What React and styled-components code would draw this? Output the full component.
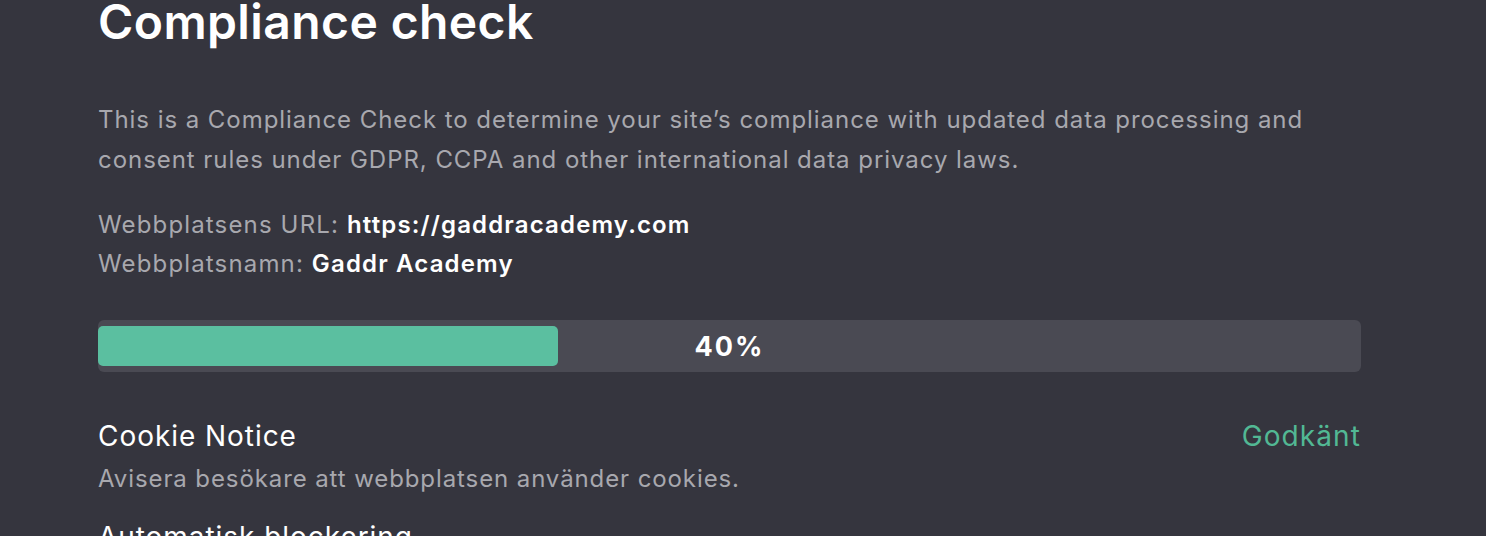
import React from "react";
import styled, { createGlobalStyle } from "styled-components";

const Global = createGlobalStyle`
  html, body { margin: 0; padding: 0; background: #35353e; }
  body { font-family: Inter, "Noto Sans", sans-serif; -webkit-font-smoothing: antialiased; }
`;

const Page = styled.main`
  width: 1486px;
  height: 536px;
  overflow: hidden;
  box-sizing: border-box;
  padding: 0 125px 0 98px;
  display: flex;
  flex-direction: column;
  & > * { flex-shrink: 0; }
`;

const Title = styled.h1`
  margin: -6px 0 0;
  font-weight: 600;
  font-size: 48px;
  line-height: 56px;
  color: #ffffff;
  letter-spacing: 0.4px;
`;

const Intro = styled.p`
  margin: 50px 0 0;
  font-size: 24px;
  line-height: 40px;
  letter-spacing: 0.95px;
  color: #a8a8ae;
`;

const Meta = styled.div`
  margin-top: 25px;
  display: flex;
  flex-direction: column;
  font-size: 24px;
  line-height: 39px;
  letter-spacing: 1.15px;
  color: #a8a8ae;
`;

const Strong = styled.span`
  color: #ffffff;
  font-weight: 600;
`;

const Bar = styled.div`
  margin-top: 37px;
  position: relative;
  height: 52px;
  border-radius: 6px;
  background: #4a4a53;
  display: flex;
  align-items: center;
`;

const Fill = styled.div`
  height: 40px;
  border-radius: 5px;
  background: #5bbfa0;
`;

const BarLabel = styled.span`
  position: absolute;
  left: 0;
  right: 0;
  text-align: center;
  font-size: 27px;
  font-weight: 700;
  color: #ffffff;
  letter-spacing: 2px;
`;

const Item = styled.div`
  margin-top: ${(p) => (p.$first ? "45px" : "23px")};
  display: flex;
  flex-direction: column;
`;

const ItemHead = styled.div`
  display: flex;
  justify-content: space-between;
  align-items: baseline;
`;

const ItemTitle = styled.span`
  font-size: 28px;
  line-height: 38px;
  letter-spacing: 0.95px;
  color: #ffffff;
`;

const Status = styled.span`
  font-size: 28px;
  line-height: 38px;
  letter-spacing: 1.1px;
  color: #52b894;
`;

const ItemDesc = styled.span`
  margin-top: 8px;
  font-size: 24px;
  line-height: 32px;
  letter-spacing: 0.9px;
  color: #a8a8ae;
`;

const items = [
  { title: "Cookie Notice", desc: "Avisera besökare att webbplatsen använder cookies.", status: "Godkänt" },
  { title: "Automatisk blockering", desc: "", status: "" },
];

export default function App() {
  const pct = 40;
  return (
    <>
      <Global />
      <Page>
        <Title>Compliance check</Title>
        <Intro>
          This is a Compliance Check to determine your site’s compliance with updated data processing and
          consent rules under GDPR, CCPA and other international data privacy laws.
        </Intro>
        <Meta>
          <span>Webbplatsens URL: <Strong>https://gaddracademy.com</Strong></span>
          <span>Webbplatsnamn: <Strong>Gaddr Academy</Strong></span>
        </Meta>
        <Bar>
          <Fill style={{ width: "36.4%" }} />
          <BarLabel>{pct}%</BarLabel>
        </Bar>
        {items.map((it, i) => (
          <Item key={i} $first={i === 0}>
            <ItemHead>
              <ItemTitle>{it.title}</ItemTitle>
              {it.status && <Status>{it.status}</Status>}
            </ItemHead>
            {it.desc && <ItemDesc>{it.desc}</ItemDesc>}
          </Item>
        ))}
      </Page>
    </>
  );
}
